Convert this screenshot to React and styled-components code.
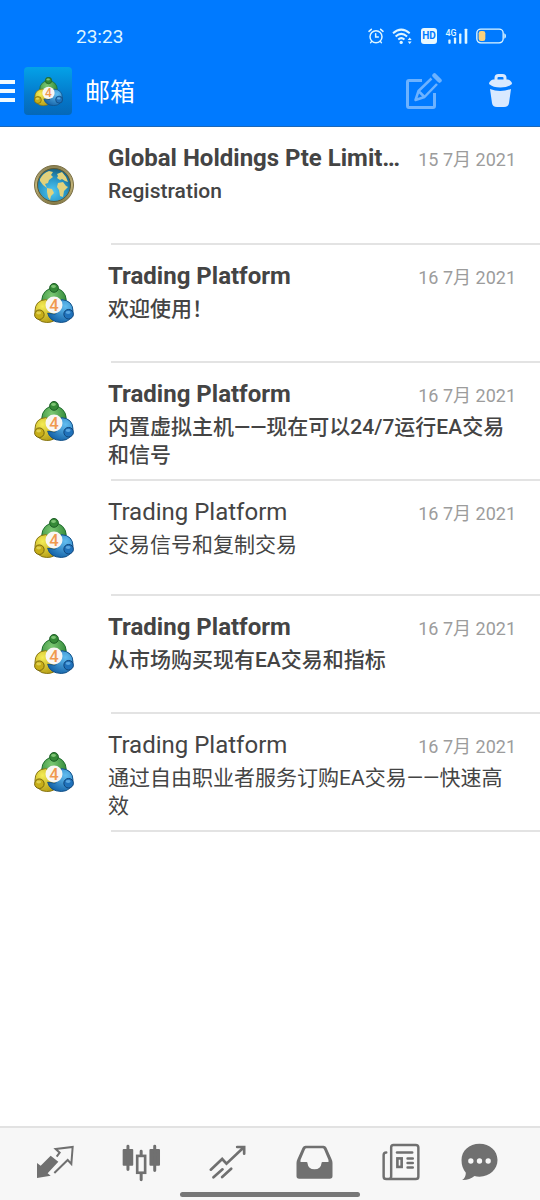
import styled, { createGlobalStyle } from "styled-components";

const GlobalStyle = createGlobalStyle`
    * {
        box-sizing: border-box;
    }

    body {
        margin: 0;
        background-color: white;
        color: #444;
        font-family: Roboto, "Noto Sans CJK SC", sans-serif;
    }
`;

const Page = styled.div`
    display: flex;
    flex-direction: column;
    min-height: 100vh;
`;

const Header = styled.header`
    background-color: #007aff;
    border-bottom: 1px solid #1c68b8;
    color: white;
`;

const StatusBar = styled.div`
    display: flex;
    justify-content: space-between;
    align-items: center;
    height: 56px;
    padding: 16px 34px 0 76px;
    color: #dff6ff;
    font-size: 19px;
`;

const StatusIcons = styled.div`
    display: flex;
    align-items: center;
    gap: 8px;
`;

const HdBadge = styled.span`
    width: 16px;
    border-radius: 3px;
    background-color: #e8f8ff;
    color: #007aff;
    font-size: 10px;
    font-weight: bold;
    line-height: 16px;
    text-align: center;
`;

const Toolbar = styled.div`
    display: flex;
    align-items: center;
    height: 70px;
    padding-right: 27px;
`;

const IconButton = styled.button`
    display: flex;
    padding: 0;
    border: none;
    background: none;
    color: inherit;
    cursor: pointer;
`;

const MenuButton = styled(IconButton)`
    flex-direction: column;
    gap: 5px;
    width: 15px;
    margin-right: 9px;
`;

const MenuLine = styled.span`
    height: 4px;
    background-color: #f0fbff;
`;

const AppIcon = styled.div`
    display: flex;
    justify-content: center;
    align-items: center;
    width: 48px;
    height: 48px;
    border-radius: 4px;
    background: linear-gradient(#04a2e8, #0479cb 60%, #0568b8);
`;

const Title = styled.h1`
    flex: 1;
    margin: 0 0 0 13px;
    padding-top: 4px;
    font-size: 25px;
    font-weight: normal;
    line-height: 36px;
`;

const Actions = styled.div`
    display: flex;
    align-items: center;
    gap: 47px;
`;

const List = styled.ul`
    flex: 1;
    margin: 0;
    padding: 0;
    list-style: none;
`;

const Item = styled.li`
    &::after {
        content: "";
        display: block;
        height: 2px;
        margin-left: 111px;
        background-color: #e3e3e3;
    }
`;

const Mail = styled.a`
    display: flex;
    gap: 34px;
    min-height: ${({ $unread }) => ($unread ? 116 : 113)}px;
    padding: 16px 24px 10px 34px;
    color: inherit;
    font-weight: ${({ $unread }) => ($unread ? "bold" : "normal")};
    text-decoration: none;
`;

const Avatar = styled.div`
    display: flex;
    align-items: center;
    /* evens out the row's paddings so the picture sits in its middle */
    margin: -6px 0 0;
`;

const Content = styled.div`
    flex: 1;
    min-width: 0;
`;

const Heading = styled.div`
    display: flex;
    justify-content: space-between;
    align-items: baseline;
    gap: 16px;
    line-height: 30px;
`;

const Sender = styled.span`
    overflow: hidden;
    font-size: 24px;
    text-overflow: ellipsis;
    white-space: nowrap;
`;

const MailDate = styled.time`
    flex-shrink: 0;
    color: #9c9c9c;
    font-size: 18px;
    font-weight: normal;
`;

const Subject = styled.p`
    margin: 2px 0 0;
    font-size: 21px;
    font-weight: ${({ $unread }) => ($unread ? 500 : 400)};
    line-height: 28px;
`;

const BottomBar = styled.nav`
    position: sticky;
    bottom: 0;
    border-top: 2px solid #e2e2e2;
    background-color: #f7f7f7;
`;

const Tabs = styled.div`
    display: grid;
    grid-template-columns: repeat(5, 6fr) 5fr;
    height: 64px;
    padding: 4px 24px 0 12px;
`;

const Tab = styled.a`
    display: flex;
    justify-content: center;
    align-items: center;
    color: #707070;
`;

const HomeIndicator = styled.div`
    width: 180px;
    height: 5px;
    margin: 0 auto 3px;
    border-radius: 3px;
    background-color: #777;
`;

function AlarmIcon() {
    return (
        <svg width="16" height="16" viewBox="0 0 48 48" fill="none" stroke="currentColor" strokeWidth="4.5" strokeLinecap="round">
            <circle cx="24" cy="26" r="18" />
            <path d="M3 10l7-6M45 10l-7-6M23 17v10h8M11 40l-3 4M37 40l3 4" />
        </svg>
    );
}

function WifiIcon() {
    return (
        <svg width="21" height="17" viewBox="0 0 64 52" fill="none" stroke="currentColor" strokeWidth="6">
            <path d="M3 16Q28-6 54 16M11 26Q28 10 46 26M19 35q9-8 19 0" />
            <circle cx="28" cy="44" r="5" fill="currentColor" stroke="none" />
            <path d="M48 37l6-8 6 8zM48 41l6 8 6-8z" fill="currentColor" stroke="none" />
        </svg>
    );
}

function SignalIcon() {
    return (
        <svg width="23" height="17" viewBox="0 0 68 52" fill="currentColor">
            <text x="0" y="24" fontSize="27" fontWeight="500">4G</text>
            <rect x="9" y="35" width="7" height="13" rx="2" />
            <rect x="26" y="29" width="7" height="19" rx="2" />
            <rect x="42" y="17" width="7" height="31" rx="2" />
            <rect x="59" y="2" width="8" height="46" rx="2" />
        </svg>
    );
}

function BatteryIcon() {
    return (
        <svg width="30" height="16" viewBox="0 0 90 48">
            <rect x="2.5" y="3.5" width="79" height="41" rx="12" fill="none" stroke="currentColor" strokeWidth="4" />
            <rect x="8" y="9" width="20" height="30" rx="7" fill="#fbd27c" />
            <path d="M85 16q5 2 5 8t-5 8z" fill="currentColor" />
        </svg>
    );
}

function ComposeIcon() {
    return (
        <svg width="36" height="36" viewBox="0 0 36 36" fill="none" stroke="#6cb2ff" strokeWidth="3">
            <path d="M16 7.500H3Q1.500 7.500 1.500 9v24q0 1.500 1.500 1.500h24q1.500 0 1.500-1.500V20" />
            <path d="M25.500 5.500L12.500 18 9.500 27l9-3L31 11M12.500 18l6 6" strokeWidth="2.500" strokeLinejoin="round" />
            <path d="M28.500 2.500l5 5" strokeWidth="4.500" strokeLinecap="round" />
        </svg>
    );
}

function TrashIcon() {
    return (
        <svg width="24" height="34" viewBox="0 0 24 34" fill="#d9e9ff">
            <path d="M7 6V4q0-2.500 2.500-2.500h4Q16 1.500 16 4v2" fill="none" stroke="#d9e9ff" strokeWidth="3" />
            <path d="M0 10q0-3 4-4.500h15q4 1.500 4 4.500-4 3.500-11.500 3.500T0 10z" />
            <path d="M1 15q10 4 21 0l-2 14q-.5 4-5 4H8q-4.500 0-5-4z" />
        </svg>
    );
}

function PlatformLogo({ size = 40 }) {
    return (
        <svg width={size} height={size} viewBox="0 0 41 41">
            <defs>
                <radialGradient id="green" cx=".4" cy=".3" r=".8">
                    <stop offset="0" stopColor="#7cc873" />
                    <stop offset="1" stopColor="#1f7a2b" />
                </radialGradient>
                <radialGradient id="yellow" cx=".35" cy=".3" r=".8">
                    <stop offset="0" stopColor="#f4ec55" />
                    <stop offset="1" stopColor="#b39a12" />
                </radialGradient>
                <radialGradient id="blue" cx=".7" cy=".3" r=".8">
                    <stop offset="0" stopColor="#62bdf0" />
                    <stop offset="1" stopColor="#1260a6" />
                </radialGradient>
            </defs>
            <circle cx="20.500" cy="17.500" r="12.500" fill="url(#green)" stroke="#1d6b2b" />
            <path d="M12 17q-11 1-11 12 1 11 12 11.500 8 0 10-5L14 18z" fill="url(#yellow)" stroke="#867411" />
            <path d="M14 31l8 1 6-15q12 1 12 12-1 11-12 11.500Q16 40 14 31z" fill="url(#blue)" stroke="#124f87" />
            <circle cx="20.500" cy="5" r="4.500" fill="#358a37" stroke="#1b5c24" />
            <circle cx="5.500" cy="32.500" r="4.900" fill="#c7ae18" stroke="#75640c" />
            <circle cx="35.500" cy="32" r="4.900" fill="#2072bb" stroke="#0f4478" />
            <ellipse cx="20" cy="3.500" rx="2.500" ry="1.500" fill="#7fc476" />
            <ellipse cx="4.800" cy="30.800" rx="2.500" ry="1.500" fill="#e0d050" />
            <ellipse cx="35" cy="30.300" rx="2.500" ry="1.500" fill="#5aa6e0" />
            <circle cx="20.500" cy="22.500" r="8.700" fill="#f8f6f4" />
            <text x="20.500" y="28.500" fontSize="17" fontWeight="500" fill="#f0994e" textAnchor="middle">4</text>
        </svg>
    );
}

function GlobeLogo() {
    return (
        <svg width="40" height="40" viewBox="0 0 40 40">
            <defs>
                <radialGradient id="sea" cx=".45" cy=".7" r=".7">
                    <stop offset="0" stopColor="#4fc8f4" />
                    <stop offset=".6" stopColor="#2793c4" />
                    <stop offset="1" stopColor="#17607f" />
                </radialGradient>
                <linearGradient id="ring" x2="0" y2="1">
                    <stop offset="0" stopColor="#8a8152" />
                    <stop offset=".5" stopColor="#c4b57a" />
                    <stop offset="1" stopColor="#857a45" />
                </linearGradient>
            </defs>
            <circle cx="20" cy="20" r="19.500" fill="url(#ring)" stroke="#7a6f45" />
            <circle cx="20" cy="20" r="16.500" fill="url(#sea)" stroke="#5f5a32" />
            <g fill="#e2d27c">
                <path d="M6 14q3-6 9-8l4 1-2 3 2 2-4 3-1 3-3 1 2 4-4-3-3-4z" />
                <path d="M13 23l5 1 2 4-3 3-1 4-2-3-1-5z" />
                <path d="M23 9l5-2 4 5 2 5-3-1-3-2-2 1-3-2 1-2z" />
                <path d="M24 18l5-1 3 4 2 1-4 4-1 6-3-1-1-6-2-3z" />
            </g>
        </svg>
    );
}

function QuotesIcon() {
    return (
        <svg width="38" height="34" viewBox="0 0 114 102">
            <path d="M3 54l11 8 30-30 23 18-32 35 9 7-41 7z" fill="currentColor" />
            <path d="M62 35l9-12-12-11 51-6-4 51-11-12-40 39" fill="none" stroke="currentColor" strokeWidth="6" />
        </svg>
    );
}

function ChartIcon() {
    return (
        <svg width="39" height="39" viewBox="0 0 118 116" fill="none" stroke="currentColor" strokeWidth="9" strokeLinecap="round">
            <rect x="2" y="17" width="32" height="51" rx="3" fill="currentColor" stroke="none" />
            <rect x="83" y="17" width="32" height="51" rx="3" fill="currentColor" stroke="none" />
            <path d="M18 9v70M99 9v73M58 24v10M58 92v18" />
            <rect x="46" y="38" width="24" height="51" strokeWidth="8" />
        </svg>
    );
}

function TradeIcon() {
    return (
        <svg width="37" height="34" viewBox="0 0 110 102" fill="none" stroke="currentColor" strokeWidth="8" strokeLinecap="round">
            <path d="M5 74l34-32 13 14 52-49M84 6h21v20M13 97l27-24M39 96l27-25" />
        </svg>
    );
}

function InboxIcon() {
    return (
        <svg width="37" height="34" viewBox="0 0 110 102" fill="currentColor">
            <path
                fillRule="evenodd"
                d="M28 2h54q6 0 9 6l15 34q3 6 3 12v39q0 8-8 8H9q-8 0-8-8V54q0-6 3-12L19 8q3-6 9-6zM31 10q-3 0-5 4L13 45v6h18q3 0 3 4 2 18 21 18t21-18q0-4 3-4h18v-6L84 14q-2-4-5-4z"
            />
        </svg>
    );
}

function NewsIcon() {
    return (
        <svg width="38" height="38" viewBox="0 0 116 114" fill="none" stroke="currentColor" strokeWidth="7.5" strokeLinecap="round">
            <path d="M35 5h68q8 0 8 8v88q0 8-8 8H13q-8 0-8-8V36q0-8 8-8M28 101V12q0-7 7-7M28 101q0 8-8 8" />
            <path d="M46 28h46" strokeWidth="8" />
            <rect x="47" y="46" width="13" height="26" strokeWidth="8" />
            <path d="M78 46h16M78 60h16M78 74h16" />
        </svg>
    );
}

function ChatIcon() {
    return (
        <svg width="37" height="38" viewBox="0 0 110 114">
            <path d="M55 2c31 0 54 21 54 49s-23 50-54 50q-9 0-15-2Q24 112 3 111q11-8 11-22Q1 74 1 51C1 23 24 2 55 2z" fill="currentColor" />
            <g fill="#f7f7f7">
                <circle cx="29" cy="54" r="8" />
                <circle cx="55" cy="54" r="8" />
                <circle cx="81" cy="54" r="8" />
            </g>
        </svg>
    );
}

const mails = [
    { sender: "Global Holdings Pte Limit...", subject: "Registration", day: 15, unread: true, logo: GlobeLogo },
    { sender: "Trading Platform", subject: "欢迎使用！", day: 16, unread: true },
    { sender: "Trading Platform", subject: "内置虚拟主机——现在可以24/7运行EA交易和信号", day: 16, unread: true },
    { sender: "Trading Platform", subject: "交易信号和复制交易", day: 16 },
    { sender: "Trading Platform", subject: "从市场购买现有EA交易和指标", day: 16, unread: true },
    { sender: "Trading Platform", subject: "通过自由职业者服务订购EA交易——快速高效", day: 16 },
];

const tabs = [
    { label: "行情", icon: QuotesIcon },
    { label: "图表", icon: ChartIcon },
    { label: "交易", icon: TradeIcon },
    { label: "邮箱", icon: InboxIcon },
    { label: "新闻", icon: NewsIcon },
    { label: "聊天", icon: ChatIcon },
];

export default function App() {
    return (
        <Page lang="zh-CN">
            <GlobalStyle />
            <Header>
                <StatusBar>
                    <span>23:23</span>
                    <StatusIcons>
                        <AlarmIcon />
                        <WifiIcon />
                        <HdBadge>HD</HdBadge>
                        <SignalIcon />
                        <BatteryIcon />
                    </StatusIcons>
                </StatusBar>
                <Toolbar>
                    <MenuButton aria-label="菜单">
                        <MenuLine />
                        <MenuLine />
                        <MenuLine />
                    </MenuButton>
                    <AppIcon>
                        <PlatformLogo size={29} />
                    </AppIcon>
                    <Title>邮箱</Title>
                    <Actions>
                        <IconButton aria-label="写邮件"><ComposeIcon /></IconButton>
                        <IconButton aria-label="删除"><TrashIcon /></IconButton>
                    </Actions>
                </Toolbar>
            </Header>
            <List>
                {mails.map(({ sender, subject, day, unread, logo: Logo = PlatformLogo }) => (
                    <Item key={subject}>
                        <Mail href="#" $unread={unread}>
                            <Avatar>
                                <Logo />
                            </Avatar>
                            <Content>
                                <Heading>
                                    <Sender>{sender}</Sender>
                                    <MailDate dateTime={`2021-07-${day}`}>{day} 7月 2021</MailDate>
                                </Heading>
                                <Subject $unread={unread}>{subject}</Subject>
                            </Content>
                        </Mail>
                    </Item>
                ))}
            </List>
            <BottomBar>
                <Tabs>
                    {tabs.map(({ label, icon: Icon }) => (
                        <Tab key={label} href="#" aria-label={label}>
                            <Icon />
                        </Tab>
                    ))}
                </Tabs>
                <HomeIndicator />
            </BottomBar>
        </Page>
    );
}
